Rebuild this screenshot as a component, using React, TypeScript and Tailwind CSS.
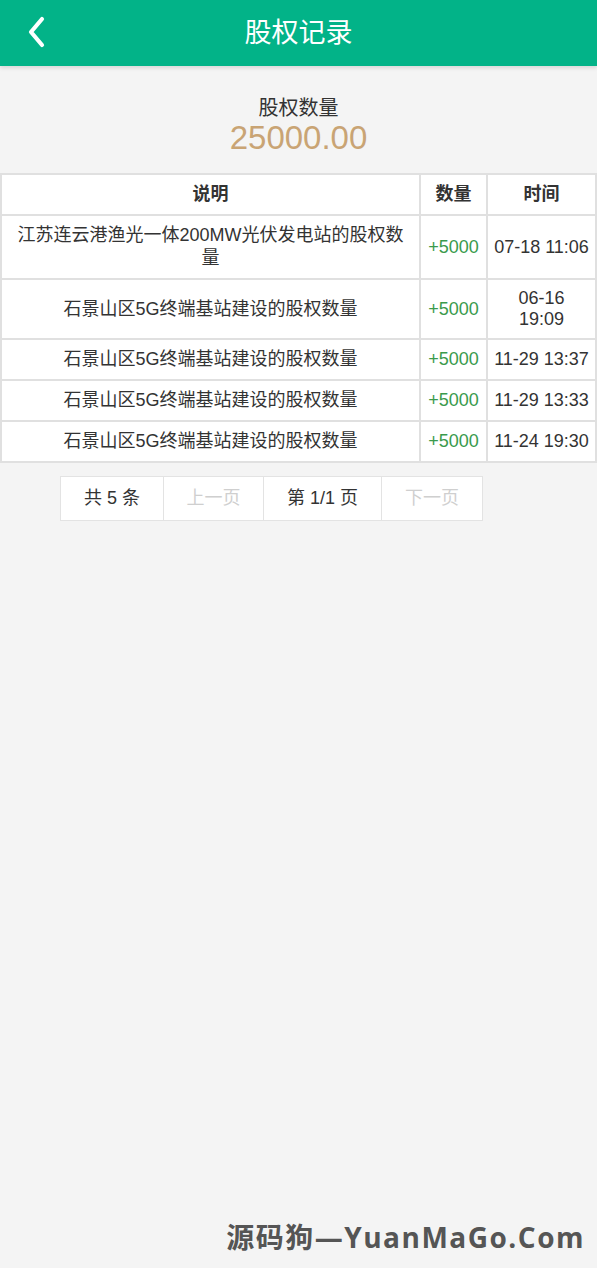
import React from "react";

const rows = [
  { desc: "江苏连云港渔光一体200MW光伏发电站的股权数量", amt: "+5000", time: "07-18 11:06" },
  { desc: "石景山区5G终端基站建设的股权数量", amt: "+5000", time: "06-16\n19:09" },
  { desc: "石景山区5G终端基站建设的股权数量", amt: "+5000", time: "11-29 13:37" },
  { desc: "石景山区5G终端基站建设的股权数量", amt: "+5000", time: "11-29 13:33" },
  { desc: "石景山区5G终端基站建设的股权数量", amt: "+5000", time: "11-24 19:30" },
];

export default function App() {
  return (
    <div
      className="relative min-h-screen bg-[#f4f4f4] text-[#333]"
      style={{ fontFamily: '"Liberation Sans", "Noto Sans CJK SC", sans-serif' }}
    >
      <header className="relative flex h-[66px] items-center justify-center bg-[#02b388] shadow-[0_2px_4px_rgba(0,0,0,0.12)]">
        <button className="absolute left-[24px] top-[14px] flex h-[36px] w-[26px] items-center justify-center">
          <svg width="22" height="34" viewBox="0 0 22 34" fill="none">
            <path d="M16 4 L5 17 L16 30" stroke="#fff" strokeWidth="4.2" strokeLinecap="round" strokeLinejoin="round" />
          </svg>
        </button>
        <h1 className="text-[27px] font-normal leading-none text-white">股权记录</h1>
      </header>

      <div className="flex flex-col items-center pt-[27px] pb-[20px]">
        <div className="text-[20px] leading-[30px] text-[#333]">股权数量</div>
        <div className="text-[33px] leading-[30px] text-[#c9a474]">25000.00</div>
      </div>

      <table className="w-full table-fixed border-collapse bg-white text-[18px] leading-[23px]">
        <colgroup>
          <col />
          <col className="w-[67px]" />
          <col className="w-[109px]" />
        </colgroup>
        <thead>
          <tr>
            <th className="border-2 border-[#e0e0e0] py-[8px] font-bold">说明</th>
            <th className="border-2 border-[#e0e0e0] py-[8px] font-bold">数量</th>
            <th className="border-2 border-[#e0e0e0] py-[8px] font-bold">时间</th>
          </tr>
        </thead>
        <tbody>
          {rows.map((r, i) => (
            <tr key={i}>
              <td className="border-2 border-[#e0e0e0] px-[14px] py-[8px] text-center">{r.desc}</td>
              <td className="border-2 border-[#e0e0e0] py-[8px] text-center text-[#3a9a4c]">{r.amt}</td>
              <td className="whitespace-pre-line border-2 border-[#e0e0e0] py-[8px] text-center leading-[21px]">{r.time}</td>
            </tr>
          ))}
        </tbody>
      </table>

      <div className="ml-[60px] mt-[13px] flex h-[45px] w-[423px] border border-[#e3e3e3] bg-white text-[18px]">
        <div className="flex w-[103px] items-center justify-center border-r border-[#e3e3e3]">共 5 条</div>
        <div className="flex w-[100px] items-center justify-center border-r border-[#e3e3e3] text-[#cfcfcf]">上一页</div>
        <div className="flex w-[118px] items-center justify-center border-r border-[#e3e3e3]">第 1/1 页</div>
        <div className="flex flex-1 items-center justify-center text-[#cfcfcf]">下一页</div>
      </div>

      <div
        className="absolute right-[12px] top-[1218px] text-[28px] font-bold leading-[38px] tracking-[1.5px] text-[#555]"
        style={{ fontFamily: '"Open Sans", "Noto Sans CJK SC", sans-serif' }}
      >
        源码狗—YuanMaGo.Com
      </div>
    </div>
  );
}
